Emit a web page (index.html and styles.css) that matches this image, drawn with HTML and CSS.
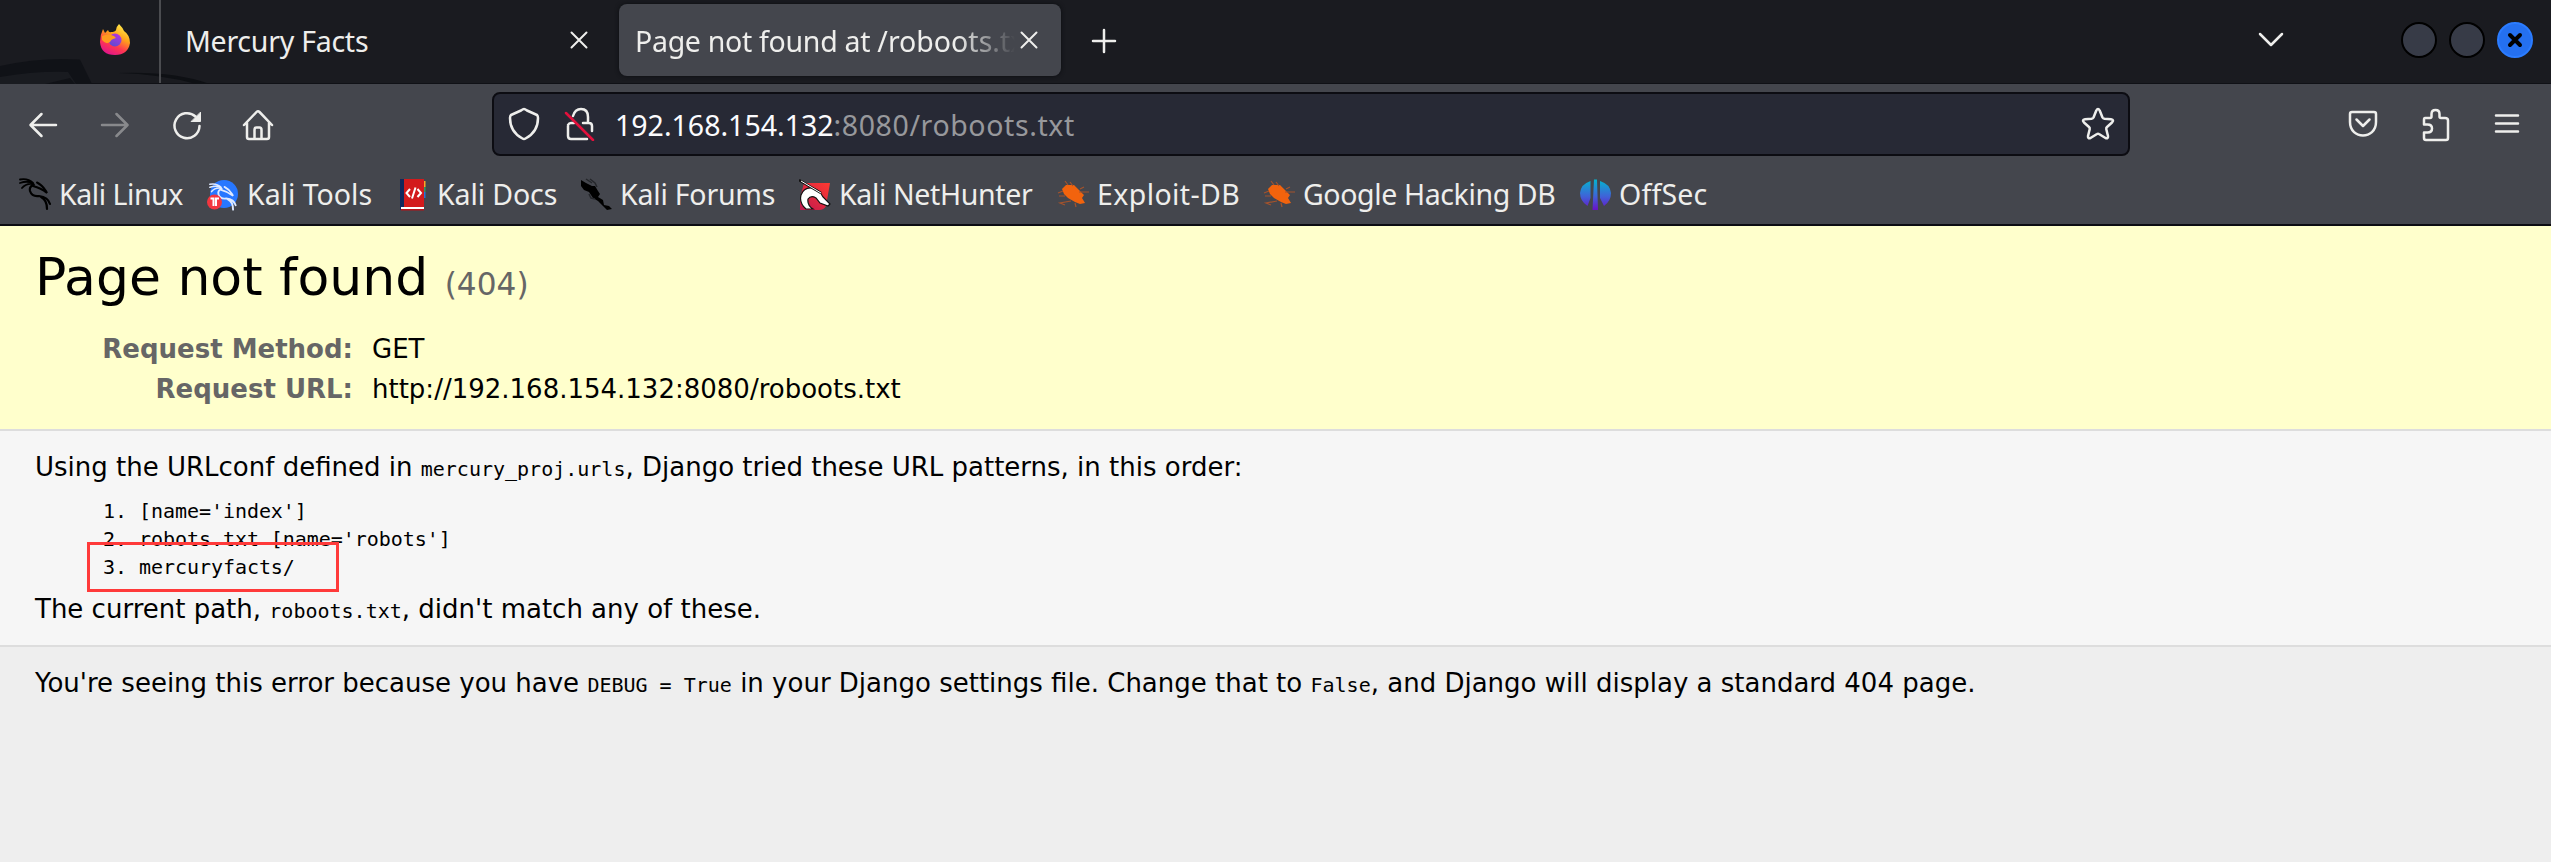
FILE: index.html
```
<!DOCTYPE html>
<html lang="en">
<head>
<meta charset="utf-8">
<title>Page not found at /roboots.txt</title>
<link rel="stylesheet" href="styles.css">
</head>
<body>
<svg class="defs" width="0" height="0" aria-hidden="true">
  <defs>
    <linearGradient id="flame" x1=".8" y1="0" x2=".3" y2="1"><stop offset="0" stop-color="#fff44f"/><stop offset=".4" stop-color="#ffa21a"/><stop offset=".7" stop-color="#ff3750"/><stop offset="1" stop-color="#e0148c"/></linearGradient>
    <linearGradient id="globe" x1="0.8" y1="0" x2=".3" y2="1"><stop offset="0" stop-color="#b833e1"/><stop offset="1" stop-color="#5b4bd0"/></linearGradient>
    <linearGradient id="hunter" x1="1" y1="0" x2="0" y2="1"><stop offset="0" stop-color="#ff3a30"/><stop offset="1" stop-color="#c01850"/></linearGradient>
    <linearGradient id="offsec" x1="0" y1="0" x2="0" y2="1"><stop offset="0" stop-color="#04b5cf"/><stop offset=".55" stop-color="#3f63d8"/><stop offset="1" stop-color="#6a10c8"/></linearGradient>
    <g id="dragon" fill="none" stroke="currentColor" stroke-linecap="round">
      <path stroke-width="1.8" d="M1 1.500Q9 0 14 5M1 5Q8 2.500 14 5M3 10Q7 5 14 6"/>
      <path stroke-width="2.200" d="M13 5.500Q16 7 14 7Q10 9 11 13Q13 19 20 18Q29 19 31 26M22 19Q28 22 28 31"/>
      <path stroke-width="2" d="M18 4.500Q23 7 27 13L28 15Q22 10 14 8"/>
    </g>
    <g id="bug">
      <path fill="#f2630d" d="M5 9L9 5L17 5L22 10L27 15L25 18L28 23L23 24L18 22L11 18L7 14Z"/>
      <path fill="none" stroke="#a4532c" stroke-width="1.200" d="M11 5L8 1M16 6L13 2M22 12L32 12M6 11L1 13M8 16L2 16M14 21L3 23L8 25M18 23L19 27M23 9L27 7"/>
    </g>
  </defs>
</svg>
<header class="titlebar">
  <svg class="wallpaper" width="230" height="84" viewBox="0 0 230 84"><path fill="#101217" d="M0 66Q40 57 80 59.500L92 84H0Z"/><path fill="#191b20" d="M0 77Q35 71 68 72L76 84H0Z"/><path fill="#101217" d="M45 84L70 78L75 84Z"/><path fill="#0e1014" d="M118 73Q174 71 210 84H196Q160 74 118 73Z"/></svg>
  <div class="pinned">
    <svg width="32" height="32" viewBox="0 0 32 32"><path fill="url(#flame)" d="M20 0Q24 4 25 7Q31 11 31 19Q29 31 16 31Q2 31 1 18Q1 11 4 5L6 9L9 6Q10 9 12 8Q16 8 17 6Q17 3 20 0Z"/><circle cx="16" cy="16" r="6.500" fill="url(#globe)"/><path fill="#ff9a1f" d="M3 12Q9 9 15 12L17 14Q12 15 11 18Q7 21 3 16Z"/></svg>
  </div>
  <div class="tab idle"><span class="label">Mercury Facts</span><svg class="close" width="18" height="18" viewBox="0 0 18 18"><path d="M1.500 1.500L16.500 16.500M16.500 1.500L1.500 16.500"/></svg></div>
  <div class="tab active"><span class="label">Page not found at <i>/roboots.txt</i></span><svg class="close" width="18" height="18" viewBox="0 0 18 18"><path d="M1.500 1.500L16.500 16.500M16.500 1.500L1.500 16.500"/></svg></div>
  <svg class="line plus" width="26" height="26" viewBox="0 0 26 26"><path d="M13 2V24M2 13H24"/></svg>
  <svg class="line chevron" width="26" height="16" viewBox="0 0 26 16"><path d="M2 2L13 13L24 2"/></svg>
  <div class="controls">
    <span class="dot"></span><span class="dot"></span>
    <span class="dot quit"><svg width="16" height="16" viewBox="0 0 16 16"><path d="M3 3L13 13M13 3L3 13"/></svg></span>
  </div>
</header>
<nav class="toolbar">
  <div class="buttons">
    <svg class="line" width="32" height="32" viewBox="0 0 32 32"><path d="M29 16H4M14.500 5L3.500 16L14.500 27"/></svg>
    <svg class="line dim" width="32" height="32" viewBox="0 0 32 32"><path d="M3 16H28M17.500 5L28.500 16L17.500 27"/></svg>
    <svg class="line" width="32" height="32" viewBox="0 0 32 32"><path d="M24.500 7.500A12.500 12.500 0 1 0 28.500 17"/><path class="solid" d="M29.500 3.500V12.500H20.500Z"/></svg>
    <svg class="line home" width="32" height="32" viewBox="0 0 32 32"><path d="M2 16L14.500 3Q16 1.500 17.500 3L30 16M5 14V28Q5 30 7 30H25Q27 30 27 28V14M12.500 30V21Q12.500 18.500 14.500 18.500H17.500Q19.500 18.500 19.500 21V30"/></svg>
  </div>
  <div class="urlbar">
    <svg class="line" width="32" height="34" viewBox="0 0 32 34"><path d="M16 2Q17 2 19 3.500L29 8Q30 9 30 11Q30 25 17.500 31.500Q16 32.500 14.500 31.500Q2 25 2 11Q2 9 3 8L13 3.500Q15 2 16 2Z"/></svg>
    <svg class="line lock" width="32" height="34" viewBox="0 0 32 34"><path d="M9 9Q11 2 17 2Q24 2 24 10V16M4 18V29Q4 32 7 32H23M19 16H25Q28 16 28 19V24M4 18Q5 16 7 16H10"/><path class="slash" d="M2 6L29 33"/></svg>
    <span class="address"><b>192.168.154.132</b><i>:8080/roboots.txt</i></span>
    <svg class="line star" width="34" height="34" viewBox="0 0 34 34"><path d="M15.300 3.500Q17 .5 18.700 3.500L21.500 10.500Q22 11.500 23.500 11.700L30 12.200Q33.500 12.700 31 15.500L26 20Q25 21 25.300 22.300L27 29Q27.300 32 24.500 31L18 27Q17 26.300 16 27L9.500 31Q6.700 32 7 29L8.700 22.300Q9 21 8 20L3 15.500Q.5 12.700 4 12.200L10.500 11.700Q12 11.500 12.500 10.500Z"/></svg>
  </div>
  <div class="actions">
    <svg class="line" width="32" height="32" viewBox="0 0 32 32"><path d="M5 4H27Q29 4 29 6V14C29 32 3 32 3 14V6Q3 4 5 4ZM9.500 11.500L16 18L22.500 11.500"/></svg>
    <svg class="line" width="32" height="34" viewBox="0 0 32 34"><path d="M6 10H11Q12.500 10 12.500 8.500V6Q12.500 2 16.500 2Q20.500 2 20.500 6V8.500Q20.500 10 22 10H26Q29 10 29 12.500V30Q29 32 27 32H7Q5 32 5 30V24.500H8.500Q13 24.500 13 20.500Q13 16.500 8.500 16.500H5V12Q5 10 6 10Z"/></svg>
    <svg class="line" width="32" height="32" viewBox="0 0 32 32"><path d="M5 7.500H27M5 15.500H27M5 23.500H27"/></svg>
  </div>
</nav>
<nav class="bookmarks">
  <a class="mark linux"><svg width="33" height="33" viewBox="0 0 33 33" color="#000"><use href="#dragon"/></svg><span>Kali Linux</span></a>
  <a class="mark tools"><svg width="33" height="33" viewBox="0 0 33 33" color="#dfeaff"><circle cx="17" cy="16" r="14" fill="#2777ff"/><use href="#dragon" transform="translate(2 5) scale(.86)"/><circle cx="7.500" cy="24" r="7.500" fill="#f3363f"/><path fill="none" stroke="#fff" stroke-width="2" d="M3.500 20.500H6.500V28M12 20.500H9V28"/></svg><span>Kali Tools</span></a>
  <a class="mark docs"><svg width="30" height="33" viewBox="0 0 30 33"><path fill="#12285c" d="M0 1H4V32H0Z"/><path fill="#d31a1c" d="M4 1H24V29H4Z"/><path fill="#fff" d="M1 29H24V31H1Z"/><path fill="#b51218" d="M1 31H24V32.500H1Z"/><path fill="#f9a825" d="M24 3H25.500V9H24Z"/><path fill="#2c9b63" d="M24 9H25.500V14H24Z"/><path fill="#2674d9" d="M24 14H25.500V20H24Z"/><path fill="none" stroke="#fff" stroke-width="2" d="M10 11L6.500 15L10 19M17.500 11L21 15L17.500 19M15.500 9.500L12 20.500"/></svg><span>Kali Docs</span></a>
  <a class="mark forums"><svg width="33" height="33" viewBox="0 0 33 33"><path fill="#000" d="M1 2L6 5L12 8L15 8L18 13L20 16L18 19L23 22L24 27L29 28L32 31L27 32L23 28L18 23L13 20L9 14L4 12L1 8Z"/><path fill="none" stroke="#25272b" stroke-width="1.500" d="M6 1L12 5M10 1L15 5L17 9M9 16L11 20L15 21"/></svg><span>Kali Forums</span></a>
  <a class="mark nethunter"><svg width="33" height="33" viewBox="0 0 33 33"><path fill="url(#hunter)" d="M5 5H31L27 28Q25 32 20 32H1V20Z"/><path fill="#fff" stroke="#111" stroke-width="1.200" d="M7 31Q0 25 2 17Q5 9 13 10Q20 11 24 19L31 26L29 28L21 25L17 20Q12 17 9 21Q8 27 14 31Z"/><path fill="none" stroke="#111" stroke-width="2.600" d="M0 2L22 15"/><path stroke="#fff" stroke-width="1" d="M2 3L22 15"/></svg><span>Kali NetHunter</span></a>
  <a class="mark exploit"><svg width="33" height="33" viewBox="0 0 33 33"><use href="#bug" y="2"/></svg><span>Exploit-DB</span></a>
  <a class="mark hacking"><svg width="33" height="33" viewBox="0 0 33 33"><use href="#bug" y="2"/></svg><span>Google Hacking DB</span></a>
  <a class="mark offsec"><svg width="32" height="33" viewBox="0 0 32 33"><path fill="url(#offsec)" d="M10.500 3V20L7.500 28Q0 23 0 15Q1 6 10.500 3ZM20 3V20L24 28Q31 23 31 15Q30 6 20 3ZM14 1.500H17L18 32H12.500Z"/></svg><span>OffSec</span></a>
</nav>
<main>
  <section class="summary">
    <h1>Page not found <small>(404)</small></h1>
    <dl>
      <dt>Request Method:</dt><dd>GET</dd>
      <dt>Request URL:</dt><dd>http://192.168.154.132:8080/roboots.txt</dd>
    </dl>
  </section>
  <section class="info">
    <p>Using the URLconf defined in <code>mercury_proj.urls</code>, Django tried these URL patterns, in this order:</p>
    <div class="patterns">
      <div>1. [name='index']</div>
      <div>2. robots.txt [name='robots']</div>
      <div>3. mercuryfacts/</div>
      <span class="highlight"></span>
    </div>
    <p>The current path, <code>roboots.txt</code>, didn't match any of these.</p>
  </section>
  <section class="explanation">
    <p>You're seeing this error because you have <code>DEBUG = True</code> in your Django settings file. Change that to <code>False</code>, and Django will display a standard 404 page.</p>
  </section>
</main>
</body>
</html>
```
FILE: styles.css
```
* { box-sizing: border-box; margin: 0; padding: 0; }
body { height: 862px; overflow: hidden; background: #eee; font-family: "DejaVu Sans", sans-serif; font-size: 26px; color: #000; }
svg { display: block; flex: none; }
.defs { position: absolute; }
.titlebar, .toolbar, .bookmarks { font-family: "Noto Sans", sans-serif; font-size: 28.5px; color: #eeeeec; white-space: nowrap; }

.titlebar { position: relative; display: flex; height: 84px; background: #1a1b20; border-bottom: 1px solid #101116; }
.wallpaper { position: absolute; left: 0; top: 0; }
.pinned { position: relative; width: 161px; padding: 24px 0 0 99px; border-right: 2px solid #4b4c50; }
.tab { display: flex; height: 72px; margin-top: 4px; align-items: center; }
.tab .label { flex: 1; min-width: 0; overflow: hidden; padding-top: 2px; line-height: 44px; }
.tab .label i { font-style: normal; letter-spacing: 0; }
.idle { width: 458px; padding: 0 31px 0 24px; letter-spacing: -.25px; }
.active { width: 442px; padding: 0 23px 0 16px; border-radius: 8px; background: #44464d; box-shadow: 0 0 4px #0c0d10; letter-spacing: -.3px; }
.active .label { margin-right: 5px; -webkit-mask-image: linear-gradient(to left, transparent, #000 58px); mask-image: linear-gradient(to left, transparent, #000 58px); }
.close { fill: none; stroke: #eeeeec; stroke-width: 2; stroke-linecap: round; }
.line { fill: none; stroke: #eeeeec; stroke-width: 2.500; stroke-linecap: round; stroke-linejoin: round; }
.line .solid { fill: #eeeeec; stroke-width: 1; }
.dim { opacity: .4; }
.plus { margin: 28px 0 0 30px; }
.chevron { margin: 32px 0 0 auto; }
.controls { display: flex; gap: 12px; margin: 22px 18px 0 117px; }
.dot { display: grid; width: 36px; height: 36px; place-items: center; border: 2px solid #000; border-radius: 50%; background: #373b47; }
.quit { border-color: #2b7cff; background: #2470f0; }
.quit svg { fill: none; stroke: #000; stroke-width: 4; stroke-linecap: round; }

.toolbar { display: flex; height: 80px; padding: 8px 28px 8px 27px; align-items: center; background: #44464d; }
.buttons { display: flex; gap: 40px; width: 465px; padding-top: 2px; }
.home { margin-left: -1px; }
.urlbar { display: flex; width: 1638px; height: 64px; padding: 0 13px 0 14px; align-items: center; border: 2px solid #0c0c12; border-radius: 8px; background: #272935; }
.lock { margin-left: 24px; }
.slash { stroke: #e2103c; }
.address { flex: 1; margin-left: 19px; padding-top: 2px; line-height: 58px; }
.address b { font-weight: 400; color: #fbfbfe; }
.address i { font-style: normal; letter-spacing: .6px; color: #97989c; }
.actions { display: flex; gap: 40px; margin-left: auto; padding-top: 2px; }

.bookmarks { display: flex; height: 62px; padding: 0 19px; border-bottom: 2px solid #0c0c12; background: #44464d; }
.mark { display: flex; align-items: center; height: 60px; }
.mark svg { margin-right: 7px; }
.linux { width: 188px; letter-spacing: -.45px; }
.tools { width: 193px; }
.docs { width: 180px; letter-spacing: -.1px; }
.forums { width: 219px; letter-spacing: -.2px; }
.nethunter { width: 258px; letter-spacing: -.35px; }
.exploit { width: 206px; letter-spacing: .4px; }
.hacking { width: 317px; letter-spacing: -.38px; }
.offsec { letter-spacing: .2px; }

.summary { height: 205px; padding: 21px 35px 20px; border-bottom: 2px solid #ddd; background: #ffc; }
h1 { margin-bottom: 22px; font-size: 52px; font-weight: 400; line-height: 60px; }
h1 small { font-size: 31.2px; line-height: 1; color: #666; }
dl { display: grid; grid-template-columns: 318px 1fr; column-gap: 19px; line-height: 40px; }
dt { text-align: right; font-weight: 700; color: #666; }
.info { height: 216px; padding: 16px 35px; border-bottom: 2px solid #ddd; background: #f6f6f6; }
p { line-height: 40px; white-space: nowrap; }
code, .patterns { font-family: "DejaVu Sans Mono", monospace; font-size: 20px; line-height: 1; }
.patterns { position: relative; margin: 10px 0 8px; padding-left: 68px; line-height: 28px; letter-spacing: -.05px; }
.highlight { position: absolute; left: 52px; top: 45px; width: 252px; height: 50px; border: 3px solid #ff3a3a; }
.explanation { padding: 16px 35px; }
```
